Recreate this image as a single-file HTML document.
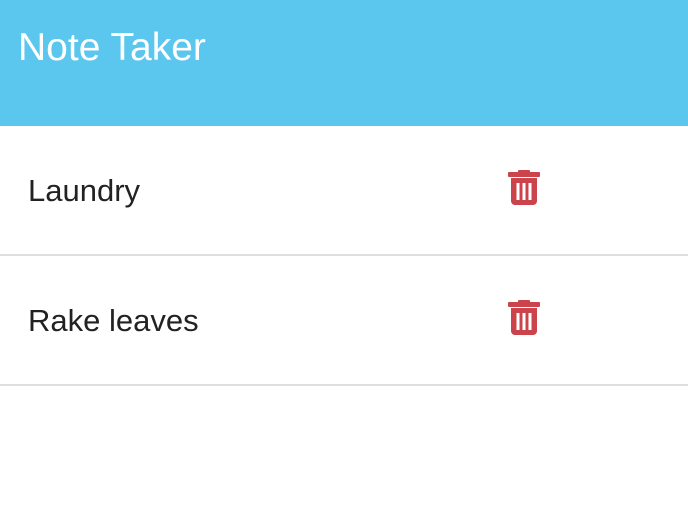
<!DOCTYPE html><html><head><style>
body{margin:0;width:688px;height:514px;background:#fff;font-family:"Liberation Sans",sans-serif;overflow:hidden}
.h{height:126px;background:#5bc6ee;color:#fff;font-size:39px;line-height:96px;padding-left:18px}
.r{height:128px;border-bottom:2px solid #dedede;position:relative}
.r span{position:absolute;left:28px;top:47px;font-size:31px;color:#222}
.r svg{position:absolute;left:508px;top:44px}
</style></head><body>
<div class="h">Note Taker</div>
<div class="r"><span>Laundry</span><svg width="32" height="36" viewBox="0 0 32 36"><rect x="10" y="0" width="12" height="4" rx="1" fill="#cc444b"/><rect x="0" y="2" width="32" height="5" rx="1" fill="#cc444b"/><path d="M3 8h26v23a4 4 0 0 1-4 4H7a4 4 0 0 1-4-4z" fill="#cc444b"/><rect x="8.5" y="13" width="3" height="17" fill="#fff"/><rect x="14.5" y="13" width="3" height="17" fill="#fff"/><rect x="20.5" y="13" width="3" height="17" fill="#fff"/></svg></div>
<div class="r"><span>Rake leaves</span><svg width="32" height="36" viewBox="0 0 32 36"><rect x="10" y="0" width="12" height="4" rx="1" fill="#cc444b"/><rect x="0" y="2" width="32" height="5" rx="1" fill="#cc444b"/><path d="M3 8h26v23a4 4 0 0 1-4 4H7a4 4 0 0 1-4-4z" fill="#cc444b"/><rect x="8.5" y="13" width="3" height="17" fill="#fff"/><rect x="14.5" y="13" width="3" height="17" fill="#fff"/><rect x="20.5" y="13" width="3" height="17" fill="#fff"/></svg></div>
</body></html>
